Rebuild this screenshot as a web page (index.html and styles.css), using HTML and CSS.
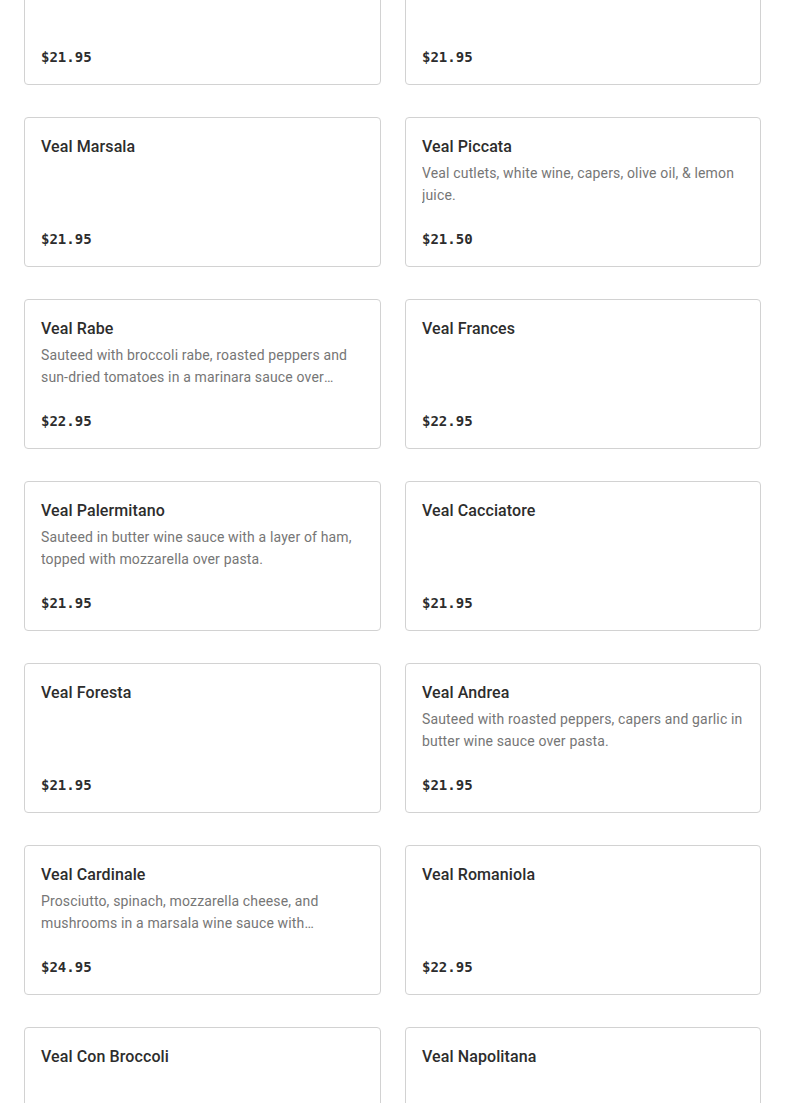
FILE: index.html
```html
<!DOCTYPE html>
<html lang="en">
<head>
<meta charset="utf-8">
<title>Veal</title>
<link rel="stylesheet" href="styles.css">
</head>
<body>
<main class="menu">
  <div class="grid">
    <article class="card"><h3 class="name">Veal Parmigiana</h3><p class="desc"></p><div class="price">$21.95</div></article>
    <article class="card"><h3 class="name">Veal Sorrentino</h3><p class="desc"></p><div class="price">$21.95</div></article>

    <article class="card"><h3 class="name">Veal Marsala</h3><p class="desc"></p><div class="price">$21.95</div></article>
    <article class="card"><h3 class="name">Veal Piccata</h3><p class="desc">Veal cutlets, white wine, capers, olive oil, &amp; lemon juice.</p><div class="price">$21.50</div></article>

    <article class="card"><h3 class="name">Veal Rabe</h3><p class="desc">Sauteed with broccoli rabe, roasted peppers and sun-dried tomatoes in a marinara sauce over pasta.</p><div class="price">$22.95</div></article>
    <article class="card"><h3 class="name">Veal Frances</h3><p class="desc"></p><div class="price">$22.95</div></article>

    <article class="card"><h3 class="name">Veal Palermitano</h3><p class="desc">Sauteed in butter wine sauce with a layer of ham, topped with mozzarella over pasta.</p><div class="price">$21.95</div></article>
    <article class="card"><h3 class="name">Veal Cacciatore</h3><p class="desc"></p><div class="price">$21.95</div></article>

    <article class="card"><h3 class="name">Veal Foresta</h3><p class="desc"></p><div class="price">$21.95</div></article>
    <article class="card"><h3 class="name">Veal Andrea</h3><p class="desc">Sauteed with roasted peppers, capers and garlic in butter wine sauce over pasta.</p><div class="price">$21.95</div></article>

    <article class="card"><h3 class="name">Veal Cardinale</h3><p class="desc">Prosciutto, spinach, mozzarella cheese, and mushrooms in a marsala wine sauce with fettuccine.</p><div class="price">$24.95</div></article>
    <article class="card"><h3 class="name">Veal Romaniola</h3><p class="desc"></p><div class="price">$22.95</div></article>

    <article class="card"><h3 class="name">Veal Con Broccoli</h3><p class="desc"></p><div class="price">$21.95</div></article>
    <article class="card"><h3 class="name">Veal Napolitana</h3><p class="desc"></p><div class="price">$21.95</div></article>
  </div>
</main>
</body>
</html>
```
FILE: styles.css
```css
html, body {
  margin: 0;
  padding: 0;
  background: #ffffff;
  overflow: hidden;
}

body {
  font-family: Roboto, "Liberation Sans", Arial, sans-serif;
  color: #2d2d2d;
}

.menu {
  padding: 0 24px;
}

.grid {
  display: grid;
  grid-template-columns: 357px 356px;
  column-gap: 24px;
  row-gap: 32px;
  margin-top: -65px;
}

.card {
  box-sizing: border-box;
  height: 150px;
  border: 1px solid #d2d2d2;
  border-radius: 4px;
  padding: 16px;
  display: flex;
  flex-direction: column;
}

.name {
  margin: 0;
  padding-top: 1px;
  font-size: 16px;
  line-height: 24px;
  font-weight: 500;
  letter-spacing: 0.1px;
  color: #2d2d2d;
}

.desc {
  margin: 3px 0 0;
  font-size: 14px;
  line-height: 22px;
  letter-spacing: 0.15px;
  color: #767676;
  display: -webkit-box;
  -webkit-line-clamp: 2;
  -webkit-box-orient: vertical;
  overflow: hidden;
}

.price {
  margin-top: auto;
  font-family: "DejaVu Sans Mono", "Liberation Mono", monospace;
  font-size: 14px;
  line-height: 22px;
  font-weight: 700;
  color: #2d2d2d;
}
```
